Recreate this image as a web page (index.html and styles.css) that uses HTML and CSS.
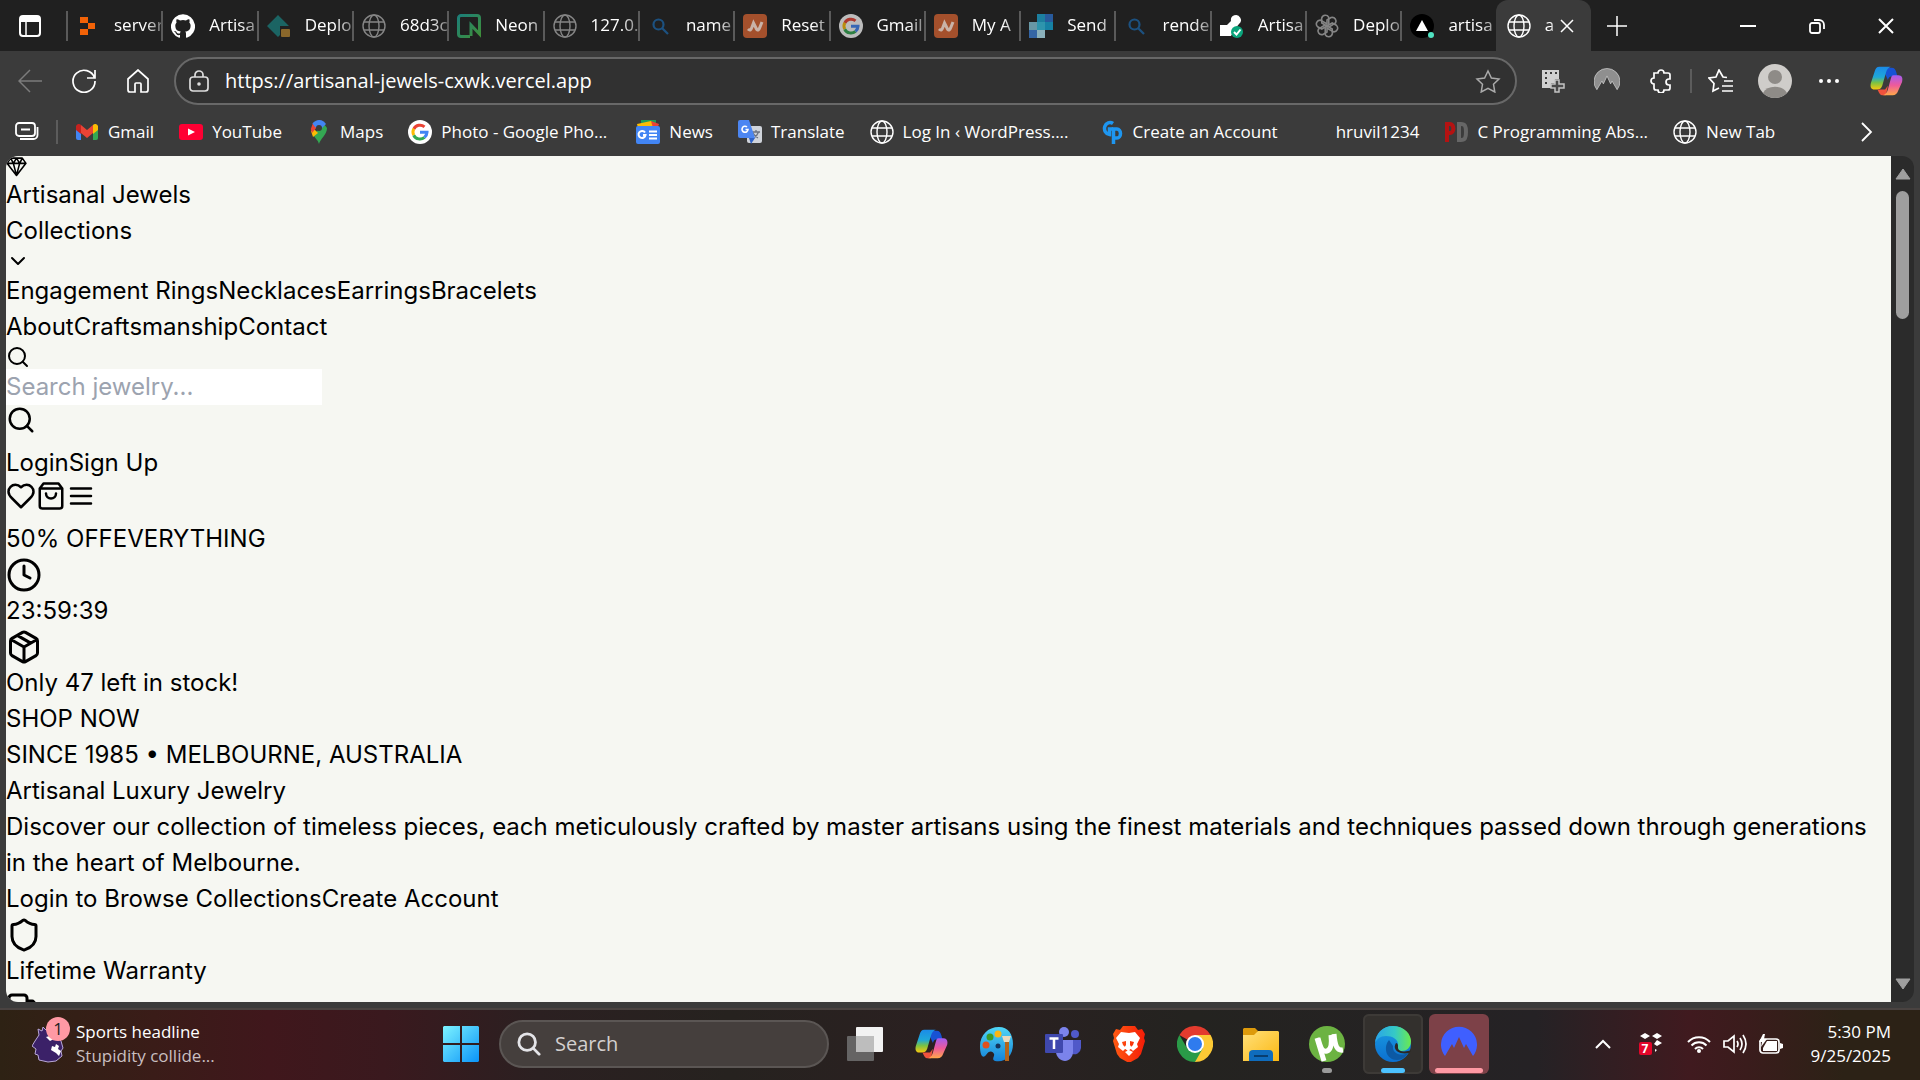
FILE: index.html
```html
<!DOCTYPE html>
<html lang="en">
<head>
<meta charset="utf-8">
<title>Artisanal Jewels</title>
<link rel="stylesheet" href="styles.css">
</head>
<body>
<svg class="sprite" aria-hidden="true">
  <defs>
    <linearGradient id="cp-a" x1="0" y1="0" x2="0" y2="1"><stop offset="0" stop-color="#1b8be8"/><stop offset=".45" stop-color="#1fa8d8"/><stop offset=".7" stop-color="#7cc243"/><stop offset="1" stop-color="#f9c80e"/></linearGradient>
    <linearGradient id="cp-b" x1="0" y1="0" x2="0" y2="1"><stop offset="0" stop-color="#a45cf0"/><stop offset=".5" stop-color="#ee5a9a"/><stop offset="1" stop-color="#ffa84a"/></linearGradient>
    <linearGradient id="win" gradientUnits="userSpaceOnUse" x1="0" y1="0" x2="36" y2="36"><stop offset="0" stop-color="#7df3ff"/><stop offset="1" stop-color="#0a93f8"/></linearGradient>
    <linearGradient id="pal" x1="0" y1="0" x2="0" y2="1"><stop offset="0" stop-color="#4fd6f7"/><stop offset="1" stop-color="#1583d8"/></linearGradient>
    <linearGradient id="brv" x1="0" y1="0" x2="1" y2="0"><stop offset="0" stop-color="#ff5a12"/><stop offset="1" stop-color="#f51d08"/></linearGradient>
    <linearGradient id="fld" x1="0" y1="0" x2="1" y2="1"><stop offset="0" stop-color="#ffe07a"/><stop offset="1" stop-color="#fcb813"/></linearGradient>
    <linearGradient id="edg" x1="0" y1="0" x2="1" y2="0"><stop offset="0" stop-color="#2aa4e8"/><stop offset=".55" stop-color="#35c9c6"/><stop offset="1" stop-color="#6bea4e"/></linearGradient>
    <linearGradient id="edg2" x1="0" y1="0" x2="0" y2="1"><stop offset="0" stop-color="#1b9de2"/><stop offset="1" stop-color="#0b6fd0"/></linearGradient>
    <linearGradient id="neon" x1="0" y1="0" x2="1" y2="1"><stop offset="0" stop-color="#1c7f78"/><stop offset="1" stop-color="#3f8f3a"/></linearGradient>
  </defs>
  <symbol id="globe" viewBox="0 0 24 24"><g fill="none" stroke="currentColor" stroke-width="1.4"><circle cx="12" cy="12" r="11"/><ellipse cx="12" cy="12" rx="5" ry="11"/><path d="M2 8h20M2 16h20"/></g></symbol>
  <symbol id="glass" viewBox="0 0 24 24"><g fill="none" stroke="currentColor" stroke-width="2.2"><circle cx="10.500" cy="10.500" r="5"/><path d="M14 14l6 6"/></g></symbol>
  <symbol id="google" viewBox="0 0 24 24"><circle cx="12" cy="12" r="12" fill="#fff"/><g fill="none" stroke-width="3"><path stroke="#ea4335" d="M5.800 9A7 7 0 0 1 16.500 6.800"/><path stroke="#fbbc05" d="M5.700 15.200a7 7 0 0 1 .1-6.400"/><path stroke="#34a853" d="M16.500 17.300a7 7 0 0 1-10.800-2.100"/><path stroke="#4285f4" d="M12 12.300h7a7 7 0 0 1-2.500 5"/></g></symbol>
  <symbol id="namecheap" viewBox="0 0 24 24"><rect width="24" height="24" rx="4" fill="#a4502c"/><path d="M5 15c2 2 3 1 4-2l1.500-4 3 6c1 2 2.500 1 3.500-2l2-5" fill="none" stroke="#c9b3a8" stroke-width="3"/></symbol>
  <symbol id="copilot" viewBox="0 0 36 36"><path fill="#1752d4" d="M14 4h10c3 0 4 2 5 5l1 4h-5c-3 0-4 1-5 4z"/><path fill="url(#cp-a)" d="M11 3h12c-3 1-4 3-5 6l-4 14c-1 3-3 4-5 4H6c-4 0-5-3-4-7l4-12c1-3 2-5 5-5z"/><path fill="#f0523d" d="M9 27h8l3-4-2 10h-4c-2 0-3-2-4-4z"/><path fill="url(#cp-b)" d="M26 12h5c4 0 5 3 4 7l-4 9c-1 3-3 5-6 5H15c3-1 4-3 5-6l3-11c1-3 1-4 3-4z"/></symbol>
  <symbol id="nord" viewBox="0 0 36 36"><path fill="currentColor" d="M4 30A18 18 0 1 1 32 30l-7-12-2 4-5-11-5 11-2-4z"/></symbol>
  <symbol id="search" viewBox="0 0 24 24"><g fill="none" stroke="currentColor" stroke-width="2" stroke-linecap="round" stroke-linejoin="round"><circle cx="11" cy="11" r="8"/><path d="m21 21-4.300-4.300"/></g></symbol>
</svg>

<div class="browser">
  <header class="tabbar">
    <button class="icon-btn tab-menu" aria-label="Tab actions"><svg width="22" height="22" viewBox="0 0 22 22"><rect x="1" y="1" width="20" height="20" rx="3" fill="none" stroke="#fff" stroke-width="2"/><path fill="#fff" d="M1 2h20v5H1z"/><path stroke="#fff" stroke-width="1.500" d="M7 6v15"/></svg></button>
    <nav class="tabs" aria-label="Tabs">
      <button class="tab"><svg viewBox="0 0 24 24"><path fill="#f26207" d="M4 3h8v6H4zM12 9h7v6h-7zM4 15h8v6H4z"/></svg><span>server</span></button>
      <button class="tab"><svg viewBox="0 0 24 24"><path fill="#fff" d="M12 .300a12 12 0 0 0-3.800 23.400c.6.100.8-.300.8-.600v-2c-3.300.700-4-1.600-4-1.600-.600-1.400-1.400-1.800-1.400-1.800-1-.700.100-.700.100-.700 1.200 0 1.900 1.200 1.900 1.200 1 1.800 2.800 1.300 3.500 1 0-.800.400-1.300.700-1.600-2.700-.300-5.500-1.300-5.500-6 0-1.200.500-2.300 1.300-3.100-.200-.400-.600-1.600 0-3.200 0 0 1-.300 3.400 1.200a11.500 11.500 0 0 1 6 0c2.300-1.500 3.300-1.200 3.300-1.200.600 1.600.200 2.800 0 3.200.9.800 1.300 1.900 1.300 3.200 0 4.600-2.800 5.600-5.500 5.900.500.400.900 1 .900 2.200v3.300c0 .300.100.700.800.600A12 12 0 0 0 12 .300"/></svg><span>Artisa</span></button>
      <button class="tab"><svg viewBox="0 0 24 24"><path fill="#1b6463" d="M11 1 22 12h-9v9l-2 2L0 12z"/><rect x="14" y="15" width="9" height="8" rx="1" fill="#8a672b"/></svg><span>Deplo</span></button>
      <button class="tab dim"><svg viewBox="0 0 24 24"><use href="#globe"/></svg><span>68d3c</span></button>
      <button class="tab"><svg viewBox="0 0 24 24"><path fill="none" stroke="url(#neon)" stroke-width="3" d="M13 22.500H4A2.500 2.500 0 0 1 1.500 20V4A2.500 2.500 0 0 1 4 1.500h16A2.500 2.500 0 0 1 22.500 4v16l-8.500-9v11"/></svg><span>Neon</span></button>
      <button class="tab dim"><svg viewBox="0 0 24 24"><use href="#globe"/></svg><span>127.0.</span></button>
      <button class="tab blue"><svg viewBox="0 0 24 24"><use href="#glass"/></svg><span>name</span></button>
      <button class="tab"><svg viewBox="0 0 24 24"><use href="#namecheap"/></svg><span>Reset</span></button>
      <button class="tab faded"><svg viewBox="0 0 24 24"><use href="#google"/></svg><span>Gmail</span></button>
      <button class="tab"><svg viewBox="0 0 24 24"><use href="#namecheap"/></svg><span>My A</span></button>
      <button class="tab"><svg viewBox="0 0 24 24"><path fill="#1c7f9f" d="M8 0h8v8H8z"/><path fill="#285a9c" d="M16 0h8v8h-8z"/><path fill="#6797a5" d="M0 8h8v8H0z"/><path fill="#2e95ad" d="M8 8h8v8H8z"/><path fill="#1681a4" d="M16 8h8v8h-8z"/><path fill="#3465a4" d="M0 16h8v8H0z"/><path fill="#8ab0bb" d="M8 16h8v8H8z"/></svg><span>Send</span></button>
      <button class="tab blue"><svg viewBox="0 0 24 24"><use href="#glass"/></svg><span>rende</span></button>
      <button class="tab"><svg viewBox="0 0 24 24"><path fill="#fff" d="M0 11h7l4-4a5 5 0 1 1 8 3l-5 6-3 6H0z"/><circle cx="17" cy="18" r="6" fill="#0aa57c"/><path d="m14 18 2.500 2.500 4-5" fill="none" stroke="#fff" stroke-width="2"/></svg><span>Artisa</span></button>
      <button class="tab dim"><svg viewBox="0 0 24 24"><g fill="none" stroke="currentColor" stroke-width="1.600"><path id="petal" d="M12 12V6l4-2.500c4-1 6 3 4.500 5.500L14 13"/><use href="#petal" transform="rotate(60 12 12)"/><use href="#petal" transform="rotate(120 12 12)"/><use href="#petal" transform="rotate(180 12 12)"/><use href="#petal" transform="rotate(240 12 12)"/><use href="#petal" transform="rotate(300 12 12)"/></g></svg><span>Deplo</span></button>
      <button class="tab"><svg viewBox="0 0 24 24"><circle cx="12" cy="12" r="12" fill="#000"/><path fill="#fff" d="m12 6 6 11H6z"/><circle cx="21" cy="21" r="3" fill="#50e3c2"/></svg><span>artisa</span></button>
      <button class="tab active"><svg viewBox="0 0 24 24"><use href="#globe"/></svg><span>a</span><svg class="close" viewBox="0 0 14 14"><path d="m1 1 12 12M13 1 1 13" stroke="#fff" stroke-width="1.500"/></svg></button>
    </nav>
    <button class="icon-btn new-tab" aria-label="New tab"><svg width="22" height="22" viewBox="0 0 22 22"><path d="M11 1v20M1 11h20" stroke="#fff" stroke-width="1.500"/></svg></button>
    <div class="window-btns">
      <button class="icon-btn" aria-label="Minimize"><svg width="16" height="16" viewBox="0 0 16 16"><path d="M0 8h16" stroke="#fff" stroke-width="2"/></svg></button>
      <button class="icon-btn" aria-label="Restore"><svg width="16" height="16" viewBox="0 0 16 16"><g fill="none" stroke="#fff" stroke-width="1.800"><rect x="1" y="5" width="10" height="10" rx="2"/><path d="M5 2h5a5 5 0 0 1 5 5v4"/></g></svg></button>
      <button class="icon-btn" aria-label="Close"><svg width="16" height="16" viewBox="0 0 16 16"><path d="m1 1 14 14M15 1 1 15" stroke="#fff" stroke-width="2"/></svg></button>
    </div>
  </header>

  <div class="toolbar">
    <div class="nav-btns">
      <button class="icon-btn muted" aria-label="Back"><svg width="24" height="24" viewBox="0 0 24 24"><path d="M24 12H1M12 1 1 12l11 11" fill="none" stroke="currentColor" stroke-width="1.500"/></svg></button>
      <button class="icon-btn" aria-label="Reload"><svg width="24" height="24" viewBox="0 0 24 24"><path d="M22.500 9A11 11 0 1 0 23 12M23 1v8h-8" fill="none" stroke="currentColor" stroke-width="1.700"/></svg></button>
      <button class="icon-btn" aria-label="Home"><svg width="24" height="24" viewBox="0 0 24 24"><path d="M2 10 12 1l10 9v11a2 2 0 0 1-2 2h-5v-8a1 1 0 0 0-1-1h-4a1 1 0 0 0-1 1v8H4a2 2 0 0 1-2-2z" fill="none" stroke="currentColor" stroke-width="1.700"/></svg></button>
    </div>
    <label class="address">
      <svg width="20" height="22" viewBox="0 0 20 22"><g fill="none" stroke="#ddd" stroke-width="1.700"><rect x="1" y="7" width="18" height="14" rx="3"/><path d="M6 7V5a4 4 0 0 1 8 0v2"/></g><circle cx="10" cy="14" r="1.800" fill="#ddd"/></svg>
      <input class="url" type="text" aria-label="Address" value="https://artisanal-jewels-cxwk.vercel.app">
      <svg width="26" height="24" viewBox="0 0 26 24"><path d="m13 2 3.400 7 7.600 1-5.500 5.300 1.300 7.700L13 19.300 6.200 23l1.300-7.700L2 10l7.600-1z" fill="none" stroke="#aaa" stroke-width="1.500"/></svg>
    </label>
    <div class="tools">
      <button class="icon-btn" aria-label="Screenshot"><svg width="24" height="24" viewBox="0 0 24 24"><path fill="#d0d0d0" d="M1 1h17v9h-4v4h-4v5H1z"/><path d="M4 4h13M4 9h5M4 14h5" stroke="#3b3b3b" stroke-width="2" stroke-dasharray="2 3"/><path d="M14 11h4v4h5v4h-5v4h-4v-4h-4v-4h4z" fill="#4a4a4a" stroke="#c4c4c4" stroke-width="1.500"/></svg></button>
      <button class="icon-btn grey" aria-label="VPN"><svg width="26" height="26" viewBox="0 0 36 36"><use href="#nord"/><path d="M4 30A18 18 0 1 1 32 30l-7-12-2 4-5-11-5 11-2-4z" fill="none" stroke="#d0d0d0"/></svg></button>
      <button class="icon-btn" aria-label="Extensions"><svg width="24" height="24" viewBox="0 0 24 24"><path d="M5 4h4a3 3 0 0 1 6 0h4a2 2 0 0 1 2 2v4h-1a3 3 0 0 0 0 6h1v3a2 2 0 0 1-2 2h-4a3 3 0 0 1-6 0H7a2 2 0 0 1-2-2v-4a3 3 0 0 1 0-6V4z" fill="none" stroke="#fff" stroke-width="1.700"/></svg></button>
      <span class="rule"></span>
      <button class="icon-btn" aria-label="Favorites"><svg width="26" height="24" viewBox="0 0 26 24"><path d="M19 8.500 15 8l-4-7-3 7-7 1 5 5.500L5 22l6-3M16 12h9M14 17h11M14 22h11" fill="none" stroke="#fff" stroke-width="1.700"/></svg></button>
      <button class="icon-btn" aria-label="Profile"><svg width="34" height="34" viewBox="0 0 34 34"><circle cx="17" cy="17" r="17" fill="#cfcdca"/><circle cx="17" cy="13" r="7" fill="#8e8b87"/><path fill="#8e8b87" d="M5 29a13 10 0 0 1 24 0 17 17 0 0 1-24 0z"/></svg></button>
      <button class="icon-btn" aria-label="Settings and more"><svg width="20" height="4" viewBox="0 0 20 4"><g fill="#fff"><circle cx="2" cy="2" r="2"/><circle cx="10" cy="2" r="2"/><circle cx="18" cy="2" r="2"/></g></svg></button>
      <button class="icon-btn copilot" aria-label="Copilot"><svg width="34" height="34" viewBox="0 0 36 36"><use href="#copilot"/></svg></button>
    </div>
  </div>

  <nav class="bookmarks" aria-label="Favorites bar">
    <button class="icon-btn" aria-label="Workspaces"><svg width="24" height="20" viewBox="0 0 24 20"><g fill="none" stroke="#fff" stroke-width="1.800"><rect x="1" y="1" width="19" height="13" rx="3"/><path d="M22.500 5v8a4 4 0 0 1-4 4H5M6 7.500h9"/></g></svg></button>
    <span class="rule"></span>
    <a class="mark" href="#"><svg viewBox="0 0 24 24"><path fill="#4285f4" d="M1 6h5v14H3a2 2 0 0 1-2-2z"/><path fill="#34a853" d="M18 6h5v12a2 2 0 0 1-2 2h-3z"/><path fill="#fbbc04" d="M18 5a3 3 0 0 1 5 1v4l-5 4z"/><path fill="#c5221f" d="M1 6a3 3 0 0 1 5-1v9l-5-4z"/><path fill="#ea4335" d="m6 5 6 5 6-5v8l-6 5-6-5z"/></svg>Gmail</a>
    <a class="mark" href="#"><svg viewBox="0 0 24 24"><rect y="4" width="24" height="16" rx="3" fill="#f03"/><path fill="#fff" d="m9 8.500 7 3.500-7 3.500z"/></svg>YouTube</a>
    <a class="mark" href="#"><svg viewBox="0 0 24 24"><path fill="#34a853" d="M12 24c1-5 8-9 8-16l-3-4-11 11c2 3 5 5 6 9z"/><path fill="#fbbc04" d="m4 11 3-2 4 4-5 4z"/><path fill="#ea4335" d="M6 3 3.800 9 5 13l5-6z"/><path fill="#4285f4" d="M5.500 3.500A8 8 0 0 1 19 4l-6 6-5-3z"/><circle cx="12" cy="8" r="3" fill="#3b3b3b"/></svg>Maps</a>
    <a class="mark" href="#"><svg viewBox="0 0 24 24"><use href="#google"/></svg>Photo - Google Pho...</a>
    <a class="mark news" href="#"><svg viewBox="0 0 24 24"><path fill="#1e9d57" d="M5 0h15v6H5z"/><path fill="#ea4335" d="m15 1 8 3-2 5H11z"/><path fill="#fbbc04" d="m1 4 14-3 2 7H2z"/><rect y="6" width="24" height="18" rx="2" fill="#4285f4"/><path d="M9 12.500a3.500 3.500 0 1 0 .5 2.500H7M13 11.500h8M13 15h8M13 18.500h8" fill="none" stroke="#fff" stroke-width="2"/></svg>News</a>
    <a class="mark" href="#"><svg viewBox="0 0 24 24"><rect x="9" y="6" width="15" height="17" rx="2" fill="#cfd3da"/><path d="M13 12h9M18 10v2M20.500 12c-1 3-3 5-5 6M15 13c1 2 3 4 5 5" stroke="#6b7280" fill="none" stroke-width="1.300"/><path fill="#3063c9" d="M11 18h6l-4 6z"/><path fill="#4c86f2" d="M2 0h9l6 18H2a2 2 0 0 1-2-2V2a2 2 0 0 1 2-2z"/><path d="M9 7a3 3 0 1 0 1 2.500H7.500" fill="none" stroke="#fff" stroke-width="1.600"/></svg>Translate</a>
    <a class="mark" href="#"><svg viewBox="0 0 24 24"><use href="#globe"/></svg>Log In ‹ WordPress....</a>
    <a class="mark wide" href="#"><svg viewBox="0 0 24 24"><g fill="none" stroke="#1e96f0" stroke-width="3.500"><path d="M13 3.500A5.500 6 0 1 0 9.500 14.500V9H13"/><path d="M13.500 24V9h3.500a3.500 4.500 0 0 1 0 9h-3.500"/></g></svg>Create an Account</a>
    <a class="mark" href="#"><svg viewBox="0 0 24 24"></svg>hruvil1234</a>
    <a class="mark" href="#"><svg viewBox="0 0 24 24"><path d="M3 22V4h3a3 4 0 0 1 0 9H3" fill="none" stroke="#b41212" stroke-width="4"/><path d="M15 4v16h2c4 0 5-2 5-8s-1-8-5-8z" fill="none" stroke="#666" stroke-width="4"/></svg>C Programming Abs...</a>
    <a class="mark" href="#"><svg viewBox="0 0 24 24"><use href="#globe"/></svg>New Tab</a>
    <button class="icon-btn more" aria-label="More favorites"><svg width="12" height="20" viewBox="0 0 12 20"><path d="m1 1 9 9-9 9" fill="none" stroke="#fff" stroke-width="1.800"/></svg></button>
  </nav>

  <div class="viewport">
    <main class="page">
      <svg class="gem" viewBox="0 0 20 20"><path d="M4.500 2h11l3.500 5-9 11.500L1 7zM1 7h18M4.500 2l2.500 5 3-5 3 5 2.500-5M7 7l3 11.500L13 7" fill="none" stroke="currentColor" stroke-linejoin="round"/></svg>
      <div>Artisanal Jewels</div>
      <div><button>Collections</button></div>
      <svg class="ico-sm" viewBox="0 0 24 24"><path d="m6 9 6 6 6-6"/></svg>
      <div><a href="#">Engagement Rings</a><a href="#">Necklaces</a><a href="#">Earrings</a><a href="#">Bracelets</a></div>
      <div><a href="#">About</a><a href="#">Craftsmanship</a><a href="#">Contact</a></div>
      <svg class="ico-sm" viewBox="0 0 24 24"><use href="#search"/></svg>
      <input class="jewel-search" type="text" placeholder="Search jewelry..." aria-label="Search jewelry">
      <div class="icon-row"><button aria-label="Search"><svg class="ico-md" viewBox="0 0 24 24"><use href="#search"/></svg></button></div>
      <div><a href="#">Login</a><a href="#">Sign Up</a></div>
      <div class="icon-row">
        <button aria-label="Wishlist"><svg class="ico-md" viewBox="0 0 24 24"><path d="M19 14c1.490-1.460 3-3.210 3-5.500A5.500 5.500 0 0 0 16.500 3c-1.760 0-3 .5-4.500 2-1.500-1.500-2.740-2-4.500-2A5.500 5.500 0 0 0 2 8.500c0 2.300 1.500 4.050 3 5.500l7 7Z"/></svg></button>
        <button aria-label="Cart"><svg class="ico-md" viewBox="0 0 24 24"><path d="M6 2 3 6v14a2 2 0 0 0 2 2h14a2 2 0 0 0 2-2V6l-3-4ZM3 6h18M16 10a4 4 0 0 1-8 0"/></svg></button>
        <button aria-label="Menu"><svg class="ico-md" viewBox="0 0 24 24"><path d="M4 12h16M4 6h16M4 18h16"/></svg></button>
      </div>
      <div><span>50% OFF</span><span>EVERYTHING</span></div>
      <svg class="ico-lg" viewBox="0 0 24 24"><circle cx="12" cy="12" r="10"/><path d="M12 6v6l4 2"/></svg>
      <div>23:59:39</div>
      <svg class="ico-lg" viewBox="0 0 24 24"><path d="m7.500 4.270 9 5.150M21 8a2 2 0 0 0-1-1.730l-7-4a2 2 0 0 0-2 0l-7 4A2 2 0 0 0 3 8v8a2 2 0 0 0 1 1.730l7 4a2 2 0 0 0 2 0l7-4A2 2 0 0 0 21 16ZM3.300 7l8.700 5 8.700-5M12 22V12"/></svg>
      <div>Only 47 left in stock!</div>
      <div><button>SHOP NOW</button></div>
      <div>SINCE 1985 • MELBOURNE, AUSTRALIA</div>
      <h1>Artisanal Luxury Jewelry</h1>
      <p>Discover our collection of timeless pieces, each meticulously crafted by master artisans using the finest materials and techniques passed down through generations in the heart of Melbourne.</p>
      <div><a href="#">Login to Browse Collections</a><a href="#">Create Account</a></div>
      <svg class="ico-lg" viewBox="0 0 24 24"><path d="M20 13c0 5-3.500 7.500-7.660 8.950a1 1 0 0 1-.67-.01C7.500 20.500 4 18 4 13V6a1 1 0 0 1 1-1c2 0 4.500-1.200 6.240-2.720a1.170 1.170 0 0 1 1.520 0C14.510 3.810 17 5 19 5a1 1 0 0 1 1 1z"/></svg>
      <div>Lifetime Warranty</div>
      <svg class="ico-lg" viewBox="0 0 24 24"><path d="M14 18V6a2 2 0 0 0-2-2H4a2 2 0 0 0-2 2v11a1 1 0 0 0 1 1h2M15 18H9M19 18h2a1 1 0 0 0 1-1v-3.650a1 1 0 0 0-.22-.620l-3.480-4.350A1 1 0 0 0 17.520 8H14"/><circle cx="17" cy="18" r="2"/><circle cx="7" cy="18" r="2"/></svg>
    </main>
    <div class="scrollbar">
      <svg width="16" height="12" viewBox="0 0 16 12"><path d="M8 1 1 11h14z" fill="#9f9f9f" stroke="#9f9f9f" stroke-linejoin="round"/></svg>
      <div class="thumb"></div>
      <svg width="16" height="12" viewBox="0 0 16 12"><path d="M8 11 1 1h14z" fill="#9f9f9f" stroke="#9f9f9f" stroke-linejoin="round"/></svg>
    </div>
  </div>
</div>

<footer class="taskbar">
  <button class="widget">
    <span class="widget-icon"><svg width="34" height="40" viewBox="0 0 34 40"><path fill="#3b2168" stroke="#b9a8d8" d="m7 12-1-6 4 2 1-4 3 3 8 3 7 8 2 7-2 3 1 5-6 5-8 1-9-2-1-5-3-1 1-5-4-3 3-5z"/><path fill="#fff" d="m14 14 7-2 1 4-4 2zm6 9 3 1 1-3 3 2-1 3 3 2-2 5-3-3-5-3z"/></svg><span class="badge">1</span></span>
    <span class="widget-text"><span>Sports headline</span><span class="sub">Stupidity collide...</span></span>
  </button>
  <div class="apps">
    <button class="app" aria-label="Start"><svg viewBox="0 0 36 36"><path fill="url(#win)" d="M1 0h16v17H0V1zM19 0h16l1 1v16H19zM0 19h17v17H1l-1-1zM19 19h17v16l-1 1H19z"/></svg></button>
    <label class="task-search"><svg width="26" height="26" viewBox="0 0 26 26"><circle cx="11" cy="11" r="9" fill="none" stroke="#e4e4e8" stroke-width="3"/><path d="m18 18 6 6" stroke="#e4e4e8" stroke-width="3" stroke-linecap="round"/></svg><input type="text" placeholder="Search" aria-label="Search"></label>
    <button class="app" aria-label="Task view"><svg viewBox="0 0 36 36"><rect x="9" y="1" width="27" height="25" rx="1" fill="#f2f2f2"/><rect y="10" width="27" height="25" rx="1" fill="#6b6b6b" opacity=".9"/><path fill="#bdbdbd" d="M9 10h18v16H9z"/></svg></button>
    <button class="app" aria-label="Copilot"><svg viewBox="-1 0 38 36"><use href="#copilot" width="36" height="36"/></svg></button>
    <button class="app" aria-label="Paint"><svg viewBox="0 0 36 36"><path fill="url(#pal)" d="M20 1C9 1 1 9 1 20c0 10 3 13 6 9 3-5 7-4 8-1 1 2-3 5 1 7 10 2 18-5 18-17C34 8 29 1 20 1z"/><circle cx="19" cy="8" r="3.500" fill="#fbb614"/><circle cx="11" cy="11" r="3.500" fill="#3c9c2a"/><circle cx="7" cy="19" r="3.500" fill="#e0511e"/><circle cx="19" cy="20" r="2.500" fill="#12345c"/><path fill="#e9d9bd" d="M23 10h9l-2 6h-5z"/><path fill="#b4651c" d="M26 16h4v19h-4z"/></svg></button>
    <button class="app" aria-label="Teams"><svg viewBox="0 0 36 36"><circle cx="19" cy="6" r="5" fill="#7b83eb"/><circle cx="30" cy="8" r="4" fill="#5059c9"/><path fill="#5059c9" d="M26 14h10v8a7 7 0 0 1-9 6z"/><path fill="#7b83eb" d="M12 14h16v12c0 5-4 9-8 9s-9-4-9-9z"/><rect y="8" width="18" height="19" rx="1" fill="#3f48ae"/><path d="M4.500 12.500h9M9 12v11" stroke="#fff" stroke-width="2.500"/></svg></button>
    <button class="app" aria-label="Brave"><svg viewBox="0 0 36 36"><path fill="url(#brv)" d="M12 0h12l3 4 4-1 3 5-1 4 1 3-4 13-3 4-9 5-9-5-3-4L2 15l1-3-1-4 3-5 4 1z"/><path fill="#fff" d="m18 7 6-1 5 6-3 6 1 3-5 4-3-3 3-3 1-3-4-1v4l2 3-4 3-4-3 2-3v-4l-4 1 1 3 3 3-3 3-5-4 1-3-3-6 5-6zM18 24l4 2-4 4-4-4z"/></svg></button>
    <button class="app" aria-label="Chrome"><svg viewBox="0 0 36 36"><path fill="#e33b2e" d="M2.400 9A18 18 0 0 1 33.600 9L18 18z"/><path fill="#fcc934" d="M33.600 9A18 18 0 0 1 18 36l-1-9 9-9-8-9z"/><path fill="#2a9b48" d="M2.400 9A18 18 0 0 0 18 36l8-14-8 4-8-4z"/><circle cx="18" cy="18" r="9" fill="#fff"/><circle cx="18" cy="18" r="7" fill="#2f7bee"/></svg></button>
    <button class="app" aria-label="File Explorer"><svg viewBox="0 0 36 36"><path fill="#dd9a0b" d="M1 2h11l3 3-2 4H0V3z"/><path fill="url(#fld)" d="M0 9h11l4-4h20l1 1v29H0z"/><path fill="#0f6cbd" d="M6 35V28a4 4 0 0 1 4-4h16a4 4 0 0 1 4 4v7z"/><path d="M11 30h14" stroke="#083e70" stroke-width="2"/></svg></button>
    <button class="app running" aria-label="uTorrent"><svg viewBox="0 0 36 36"><circle cx="18" cy="18" r="18" fill="#6cb342"/><path d="m8 12 7 23M9 12c3 12 5 14 9 13s5-6 4-16M25 8c1 12 3 17 9 16" fill="none" stroke="#fff" stroke-width="5"/></svg></button>
    <button class="app open" aria-label="Edge"><svg viewBox="0 0 36 36"><circle cx="18" cy="18" r="18" fill="url(#edg2)"/><path fill="#0c59a4" d="M14 14c-6 7-3 20 8 20 5 0 9-3 11-7-8 4-16 0-15-7z"/><path fill="url(#edg)" d="M0 17C1 7 8 0 18 0c12 0 18 9 18 15 0 7-5 10-9 10-6 0-5-2-4-5 1-7-6-10-12-10C5 10 2 13 0 17z"/><path fill="#2b2825" d="M21 17c-4 6 2 12 13 10l3-3c-5 2-15 3-14-4 0-2-1-3-2-3z"/></svg></button>
    <button class="app alert" aria-label="NordVPN"><svg viewBox="0 0 36 36"><use href="#nord"/></svg></button>
  </div>
  <div class="tray">
    <button class="icon-btn tray-more" aria-label="Show hidden icons"><svg width="16" height="10" viewBox="0 0 16 10"><path d="m1 9 7-7 7 7" fill="none" stroke="#fff" stroke-width="2"/></svg></button>
    <button class="icon-btn dropbox" aria-label="Dropbox"><svg width="24" height="24" viewBox="0 0 24 24"><path fill="#fff" d="m6 1 5 3-5 3-5-3zm12 0 5 3-5 3-5-3zm0 7 5 3-5 3-3-2zm-2 9 2 1-2 2z"/><rect y="10" width="13" height="13" rx="2" fill="#e3062a"/><text x="6" y="21" class="drop-num">7</text></svg></button>
    <button class="icon-btn" aria-label="Network"><svg width="24" height="20" viewBox="0 0 24 20"><g fill="none" stroke="#fff" stroke-width="2"><path d="M1 8a15 15 0 0 1 22 0M4.500 11.500a10.500 10.500 0 0 1 15 0M8 15a5.500 5.500 0 0 1 8 0"/></g><circle cx="12" cy="17" r="2" fill="#fff"/></svg></button>
    <button class="icon-btn" aria-label="Volume"><svg width="24" height="20" viewBox="0 0 24 20"><path d="M1 7v6h4l6 5V2L5 7zM14 7q2 3 0 6M17 4q4 6 0 12M20 1q6 9 0 18" fill="none" stroke="#fff" stroke-width="1.700"/></svg></button>
    <button class="icon-btn" aria-label="Battery"><svg width="24" height="20" viewBox="0 0 24 20"><rect x="1" y="5" width="19" height="14" rx="3" fill="none" stroke="#fff" stroke-width="1.700"/><path fill="#fff" d="M8 7h10v10H4v-3zM21 9l3 1v4l-3 1zM4 0 0 8h3l-1 5 6-8H5l1-5z"/></svg></button>
    <button class="clock"><span>5:30 PM</span><span>9/25/2025</span></button>
  </div>
</footer>
</body>
</html>
```
FILE: styles.css
```css
* { box-sizing: border-box; }

body {
  margin: 0;
  height: 100vh;
  display: flex;
  flex-direction: column;
  overflow: hidden;
  background: #3b3b3b;
  color: #fff;
  font: 17px/24px "Open Sans", "Noto Sans", sans-serif;
}

button, input {
  font: inherit;
  color: inherit;
  background: none;
  border: 0;
  padding: 0;
  margin: 0;
  outline: 0;
}

a { color: inherit; text-decoration: none; }
svg { display: block; flex: none; }
.sprite { position: absolute; width: 0; height: 0; }

.browser { flex: 1; min-height: 0; display: flex; flex-direction: column; }
.icon-btn { display: grid; place-items: center; flex: none; }
.rule { width: 2px; height: 24px; background: #5c5c5c; flex: none; }

/* Tab strip */
.tabbar { height: 51px; display: flex; align-items: center; background: #202020; }
.tab-menu { width: 60px; }
.tabs {
  flex: 1;
  min-width: 0;
  display: grid;
  grid-auto-flow: column;
  grid-auto-columns: minmax(0, 1fr);
  align-self: stretch;
  align-items: center;
  padding-left: 6px;
}
.tab {
  min-width: 0;
  height: 30px;
  display: flex;
  align-items: center;
  gap: 14px;
  padding-left: 8px;
  border-left: 2px solid #5a5a5a;
  white-space: nowrap;
}
.tab svg { width: 24px; height: 24px; }
.tab span {
  flex: 1;
  min-width: 0;
  padding-bottom: 2px;
  overflow: hidden;
  text-align: left;
  mask-image: linear-gradient(90deg, #000 65%, #0006);
}
.tab.dim svg { color: #858585; }
.tab.blue svg { color: #1c5180; }
.tab.faded svg { opacity: .7; }
.tab.active {
  height: 51px;
  padding: 0 17px 0 11px;
  border: 0;
  border-radius: 12px 12px 0 0;
  background: #3b3b3b;
}
.tab.active span { margin-right: -8px; }
.tab.active .close { width: 14px; height: 14px; }
.new-tab { width: 52px; }
.window-btns { display: flex; flex: none; padding-left: 70px; }
.window-btns .icon-btn { width: 69px; height: 51px; }

/* Toolbar */
.toolbar { height: 60px; display: flex; align-items: center; }
.nav-btns { display: flex; padding: 0 9px 0 3px; }
.nav-btns .icon-btn { width: 54px; }
.muted { color: #7c7c7c; }
.grey { color: #8f8f8f; }
.address {
  flex: 1;
  min-width: 0;
  height: 48px;
  display: flex;
  align-items: center;
  gap: 16px;
  padding: 0 14px 0 13px;
  border: 2px solid #686868;
  border-radius: 24px;
  background: #313131;
}
.url { flex: 1; min-width: 0; font-size: 20px; }
.tools { display: flex; align-items: center; padding: 0 6px 0 9px; }
.tools .icon-btn { width: 54px; }
.tools .rule { margin: 0 2px; }
.tools .copilot { width: 56px; margin-left: 2px; }

/* Favorites bar */
.bookmarks { height: 45px; display: flex; align-items: center; gap: 25px; padding: 0 47px 3px 15px; white-space: nowrap; }
.bookmarks .rule { margin: 0 -8px 0 -8px; }
.mark { display: flex; align-items: center; gap: 9px; }
.mark svg { width: 24px; height: 24px; }
.mark.news { margin-left: 4px; }
.mark.wide { margin-left: 6px; }
.more { margin-left: auto; }

/* Page viewport */
.viewport { flex: 1; min-height: 0; display: flex; margin: 0 6px 6px; border-radius: 12px; overflow: hidden; }
.page {
  flex: 1;
  min-width: 0;
  overflow: hidden;
  background: #f6f7f2;
  color: #000;
  font: 24px/36px Inter, sans-serif;
}
.page h1, .page p { margin: 0; font: inherit; }
.page button { display: inline-block; vertical-align: top; }
.page svg { fill: none; stroke: currentColor; stroke-width: 2; stroke-linecap: round; stroke-linejoin: round; }
.page .gem { width: 21px; height: 21px; stroke-width: 1.5; }
.ico-sm { width: 24px; height: 24px; }
.ico-md { width: 30px; height: 30px; }
.ico-lg { width: 36px; height: 36px; }
.icon-row { display: flex; align-items: flex-start; height: 40px; }
.jewel-search { display: block; width: 316px; height: 36px; background: #fff; }
.jewel-search::placeholder { color: #9ca3af; opacity: 1; }

.scrollbar { width: 23px; display: flex; flex-direction: column; align-items: center; padding: 12px 0; background: #2b2b2b; }
.thumb { width: 13px; height: 128px; margin: 11px 0 auto; border-radius: 7px; background: #9f9f9f; }

/* Taskbar */
.taskbar {
  height: 72px;
  display: grid;
  grid-template-columns: 1fr auto 1fr;
  align-items: center;
  padding-bottom: 2px;
  border-top: 2px solid #4a4341;
  background: linear-gradient(90deg, #2e2214 0, #3a1c18 8%, #40171c 14%, #3a191e 20%, #2b2021 28%, #26221f 38%, #2b2021 50%, #242320 62%, #252225 80%, #401a1f 88%, #3a1c1c 91%, #2c2216 96%, #2c2216 100%);
}
.widget { display: flex; align-items: center; gap: 9px; padding-left: 32px; text-align: left; }
.widget-icon { position: relative; width: 35px; height: 46px; padding-top: 2px; }
.badge {
  position: absolute;
  top: -4px;
  left: 14px;
  width: 24px;
  height: 24px;
  border-radius: 12px;
  background: #ff99a4;
  color: #222;
  text-align: center;
}
.widget-text { display: grid; }
.sub { color: #c9bfc0; }
.apps { display: flex; align-items: center; gap: 6px; }
.app { position: relative; width: 60px; height: 60px; display: grid; place-items: center; border-radius: 6px; }
.app svg { width: 36px; height: 36px; }
.app::after { position: absolute; bottom: 1px; left: 50%; transform: translateX(-50%); height: 5px; border-radius: 3px; }
.running::after { content: ""; width: 10px; background: #9a9a9a; }
.open { background: #33302d; box-shadow: inset 0 0 0 2px #3d3a37; }
.open::after { content: ""; width: 24px; background: #4cc2ff; }
.alert { background: #7d4148; color: #3f5fff; }
.alert::after { content: ""; width: 48px; background: #ff99a4; }
.task-search {
  width: 330px;
  height: 48px;
  margin-left: 2px;
  display: flex;
  align-items: center;
  gap: 14px;
  padding-left: 16px;
  border: 2px solid #5b5654;
  border-radius: 24px;
  background: #453f3d;
}
.task-search svg { width: 24px; height: 24px; }
.task-search input { flex: 1; min-width: 0; font-size: 20px; }
.task-search input::placeholder { color: #d4d0cf; opacity: 1; }
.tray { display: flex; align-items: center; justify-content: flex-end; gap: 12px; padding-right: 29px; }
.tray-more { margin-right: 16px; }
.dropbox { margin-right: 12px; }
.drop-num { fill: #fff; font: bold 12px "Open Sans", sans-serif; text-anchor: middle; }
.clock { display: grid; margin-left: 15px; text-align: right; }
```
